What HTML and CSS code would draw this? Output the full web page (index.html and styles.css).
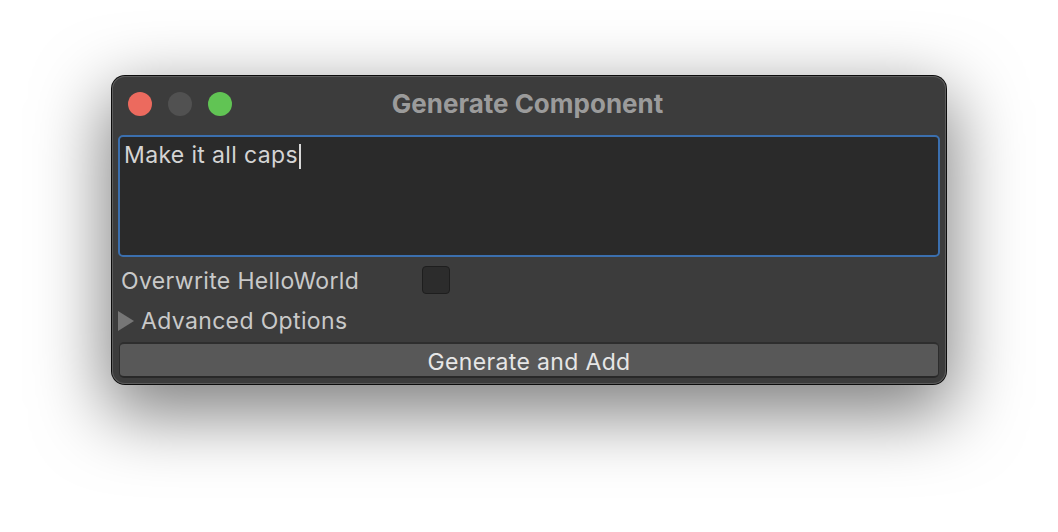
FILE: index.html
```html
<!DOCTYPE html>
<html>
<head>
<meta charset="utf-8">
<link rel="stylesheet" href="styles.css">
</head>
<body>
<div class="window">
  <div class="titlebar">
    <div class="lights">
      <span class="light red"></span>
      <span class="light gray"></span>
      <span class="light green"></span>
    </div>
    <div class="title">Generate Component</div>
  </div>
  <div class="content">
    <div class="textarea"><span class="typed">Make it all caps</span><span class="caret"></span></div>
    <div class="row">
      <span class="label">Overwrite HelloWorld</span>
      <span class="checkbox"></span>
    </div>
    <div class="row adv">
      <svg class="tri" width="16" height="20" viewBox="0 0 16 20"><polygon points="0,0 16,10 0,20" fill="#767676"/></svg>
      <span class="label">Advanced Options</span>
    </div>
    <div class="button">Generate and Add</div>
  </div>
</div>
</body>
</html>
```
FILE: styles.css
```css
html, body {
  margin: 0;
  padding: 0;
  background: #ffffff;
}
body {
  width: 1058px;
  height: 532px;
  overflow: hidden;
  font-family: Inter, "Noto Sans", sans-serif;
}
.window {
  width: 834px;
  height: 308px;
  margin: 76px auto 0;
  box-sizing: border-box;
  background: #3c3c3c;
  border-radius: 13px;
  box-shadow: 0 0 0 1px #0c0c0c, inset 0 0 0 1px #5c5c5c, 0 24px 70px 6px rgba(0,0,0,0.5);
  display: flex;
  flex-direction: column;
}
.titlebar {
  height: 59px;
  position: relative;
  display: flex;
  align-items: center;
  justify-content: center;
}
.lights {
  position: absolute;
  left: 16px;
  top: 16px;
  display: flex;
  gap: 16px;
}
.light {
  width: 24px;
  height: 24px;
  border-radius: 50%;
  display: block;
}
.red { background: #ec6a5e; }
.gray { background: #515151; }
.green { background: #61c454; }
.title {
  color: #9b9b9b;
  font-weight: 700;
  font-size: 26px;
  margin-top: -5px;
  margin-left: -3px;
}
.content {
  padding: 0 6px 5px 6px;
  display: flex;
  flex-direction: column;
}
.textarea {
  height: 122px;
  box-sizing: border-box;
  background: #2a2a2a;
  border: 2px solid #3b6fae;
  border-radius: 5px;
  padding: 4px 4px;
  color: #d4d4d4;
  font-size: 23px;
  letter-spacing: 0.35px;
  line-height: 28px;
  display: flex;
  align-items: flex-start;
}
.caret {
  display: inline-block;
  width: 2px;
  height: 25px;
  background: #d8d8d8;
  margin-top: 3px;
  margin-left: 1px;
}
.row {
  height: 41px;
  display: flex;
  align-items: center;
  color: #c9c9c9;
  font-size: 23px;
  letter-spacing: 0.35px;
}
.textarea + .row {
  margin-top: 3px;
  padding-left: 3px;
}
.checkbox {
  width: 26px;
  height: 26px;
  background: #2c2c2c;
  border: 1px solid #1e1e1e;
  border-radius: 4px;
  margin-left: 63px;
  margin-top: -1px;
}
.adv {
  height: 40px;
}
.tri {
  margin-right: 7px;
}
.button {
  margin-top: 1px;
  height: 36px;
  box-sizing: border-box;
  background: #585858;
  border: 1px solid #2c2c2c;
  border-top: 2px solid #2e2e2e;
  border-bottom: 2px solid #282828;
  border-radius: 5px;
  display: flex;
  align-items: center;
  justify-content: center;
  color: #e6e6e6;
  font-size: 23px;
  letter-spacing: 0.35px;
  margin-left: 1px;
  margin-right: 1px;
  padding-top: 3px;
}
```
